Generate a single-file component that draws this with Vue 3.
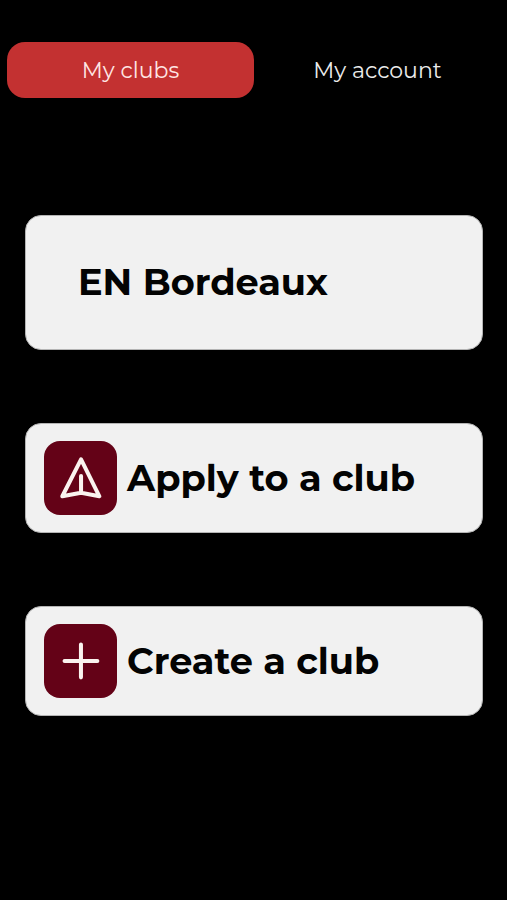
<script setup>
import { ref } from 'vue'

const activeTab = ref('clubs')

const tabs = [
  { id: 'clubs', label: 'My clubs' },
  { id: 'account', label: 'My account' }
]

const actions = [
  { id: 'apply', label: 'Apply to a club' },
  { id: 'create', label: 'Create a club' }
]
</script>

<template>
  <div class="screen">
    <nav class="tabs">
      <button
        v-for="tab in tabs"
        :key="tab.id"
        class="tab"
        :class="{ active: activeTab === tab.id }"
        @click="activeTab = tab.id"
      >
        {{ tab.label }}
      </button>
    </nav>

    <main class="cards">
      <div class="card club">
        <span class="title">EN Bordeaux</span>
      </div>

      <div v-for="action in actions" :key="action.id" class="card action">
        <div class="icon">
          <svg v-if="action.id === 'apply'" viewBox="0 0 73 73">
            <path d="M36.8 18.2 L55 54.9 L36.8 51.4 L18.2 54.9 Z M36.8 51.4 V34.8" />
          </svg>
          <svg v-else viewBox="0 0 73 73">
            <path d="M36.7 20.4 V53 M20.4 36.7 H53" />
          </svg>
        </div>
        <span class="title">{{ action.label }}</span>
      </div>
    </main>
  </div>
</template>

<style>
body {
  background: #000;
}
</style>

<style scoped>
.screen {
  box-sizing: border-box;
  width: 100%;
  height: 900px;
  padding-top: 41.5px;
  background: #000;
  font-family: Montserrat, Inter, sans-serif;
}

.tabs {
  display: grid;
  grid-template-columns: 1fr 1fr;
  padding: 0 6px 0 7px;
}

.tab {
  height: 56.5px;
  padding: 2px 0 0;
  border: 0;
  border-radius: 18px;
  background: transparent;
  color: #ececec;
  font-family: inherit;
  font-size: 22px;
  font-weight: 400;
  white-space: nowrap;
}

.tab.active {
  background: #c33131;
  color: #ffe6e4;
}

.cards {
  display: flex;
  flex-direction: column;
  gap: 73.5px;
  padding: 117px 24px 0 25px;
}

.card {
  box-sizing: border-box;
  display: flex;
  align-items: center;
  border: 1px solid #b4b4b4;
  border-radius: 16px;
  background: #f1f1f1;
}

.club {
  height: 134.5px;
  padding-left: 52px;
}

.action {
  height: 109.7px;
  padding-left: 17.6px;
  gap: 10px;
}

.icon {
  flex: none;
  width: 73.5px;
  height: 73.5px;
  border-radius: 16px;
  background: #640217;
}

.icon svg {
  display: block;
  width: 100%;
  height: 100%;
  fill: none;
  stroke: #fbf3ef;
  stroke-width: 4;
  stroke-linecap: round;
  stroke-linejoin: round;
}

.title {
  padding-top: 1px;
  color: #030303;
  font-size: 36.7px;
  font-weight: 700;
  line-height: 1;
  white-space: nowrap;
}
</style>
